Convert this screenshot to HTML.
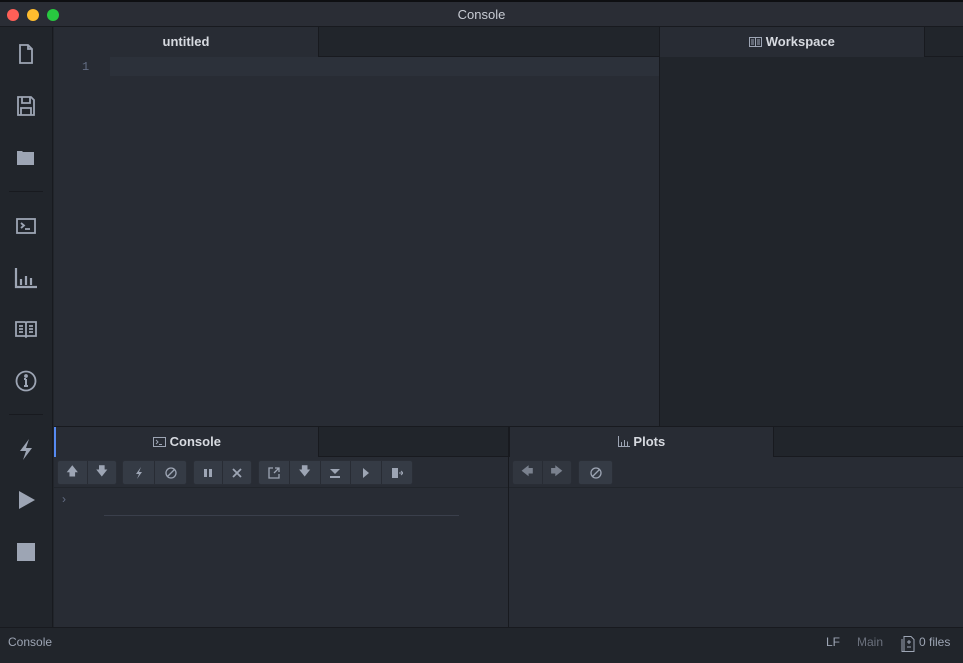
<!DOCTYPE html>
<html><head><meta charset="utf-8"><style>
*{box-sizing:border-box;margin:0;padding:0}
body{width:963px;height:657px;overflow:hidden;background:#21252b;font-family:"Liberation Sans",sans-serif;color:#d7dae0;position:relative}
.abs{position:absolute}
.title{left:0;top:0;width:963px;height:27px;background:#2a2d35;border-top:2px solid #0e0f12;border-bottom:1px solid #181a1f;text-align:center;font-size:13px;line-height:26px;color:#c8ccd4}
.dot{top:9px;width:12px;height:12px;border-radius:50%}
.side{left:0;top:27px;width:53px;height:600px;background:#21252b;border-right:1px solid #181a1f}
.ic{position:absolute;left:14px;width:24px;height:24px}
.ic svg{width:24px;height:24px;stroke:#9da5b4;fill:none;stroke-width:1.8}
.sep{position:absolute;left:9px;width:34px;height:1px;background:#181a1f}
.tabbar{background:#21252b;border-bottom:1px solid #181a1f}
.tab{background:#282c34;text-align:center;font-size:13px;font-weight:bold;color:#d7dae0;line-height:29px;border-right:1px solid #181a1f}
.btn{position:absolute;top:460px;height:25px;background:#353b45;border:1px solid #2a2e36;border-radius:3px;display:flex}
.btn span{flex:1;border-right:1px solid #282c34;display:flex;align-items:center;justify-content:center;color:#9da5b4;font-size:12px}
.btn span:last-child{border-right:none}
.btn svg{width:12px;height:12px;fill:#9da5b4;stroke:#9da5b4}
</style></head><body>
<div class="abs title">Console</div>
<div class="abs dot" style="left:7px;background:#fe5f57"></div>
<div class="abs dot" style="left:27px;background:#febc2e"></div>
<div class="abs dot" style="left:47px;background:#28c840"></div>

<div class="abs side">
 <div class="ic" style="top:15px"><svg viewBox="0 0 24 24"><path d="M6 3h8l4 4v14H6z M14 3v4h4"/></svg></div>
 <div class="ic" style="top:67px"><svg viewBox="0 0 24 24"><path d="M4 3h13l3 3v15H4z M8 3v6h8V3 M7 21v-7h10v7"/></svg></div>
 <div class="ic" style="top:119px"><svg viewBox="0 0 24 24"><path d="M3 5h5l1 1h11v13H3z" fill="#9da5b4" stroke="none"/></svg></div>
 <div class="sep" style="top:164px"></div>
 <div class="ic" style="top:187px"><svg viewBox="0 0 24 24"><rect x="3" y="5" width="18" height="14"/><path d="M7 9l3 2.5-3 2.5M11 15h5"/></svg></div>
 <div class="ic" style="top:239px"><svg viewBox="0 0 24 24"><path d="M2 2v19h21M7 19v-6M12 19v-9M17 19v-7" stroke-width="2.2"/></svg></div>
 <div class="ic" style="top:290px"><svg viewBox="0 0 24 24"><path d="M2 5h9l1 1 1-1h9v14H13l-1 1-1-1H2z M12 6v14 M5 9h4M5 12h4M5 15h4M15 9h4M15 12h4M15 15h4"/></svg></div>
 <div class="ic" style="top:342px"><svg viewBox="0 0 24 24"><circle cx="12" cy="12" r="9.5"/><path d="M12 10v7M10 17h4M10 10h2" stroke-width="2"/><circle cx="12" cy="7" r="1" fill="#9da5b4"/></svg></div>
 <div class="sep" style="top:387px"></div>
 <div class="ic" style="top:410px"><svg viewBox="0 0 24 24"><path d="M15 2L6 14h6l-3 9 9-12h-6z" fill="#9da5b4" stroke="none"/></svg></div>
 <div class="ic" style="top:461px"><svg viewBox="0 0 24 24"><path d="M5 3l16 9-16 9z" fill="#9da5b4" stroke="none"/></svg></div>
 <div class="abs" style="left:17px;top:516px;width:18px;height:18px;background:#9da5b4"></div>
</div>

<div class="abs tabbar" style="left:54px;top:27px;width:605px;height:30px"></div>
<div class="abs tab" style="left:54px;top:27px;width:265px;height:30px">untitled</div>
<div class="abs" style="left:54px;top:57px;width:605px;height:370px;background:#282c34"></div>
<div class="abs" style="left:110px;top:57px;width:549px;height:19px;background:#2c313a"></div>
<div class="abs" style="left:82px;top:60px;font-family:'Liberation Mono',monospace;font-size:12px;color:#636d83">1</div>

<div class="abs" style="left:659px;top:27px;width:1px;height:400px;background:#181a1f"></div>
<div class="abs tabbar" style="left:660px;top:27px;width:303px;height:30px"></div>
<div class="abs tab" style="left:660px;top:27px;width:265px;height:30px"><svg width="13" height="10" viewBox="0 0 13 10" style="vertical-align:-1px;stroke:#9da5b4;fill:none"><path d="M0.5 .5h12v9H.5zM6.5 .5v9M2 3h3M2 5h3M2 7h3M8 3h3M8 5h3M8 7h3"/></svg> Workspace</div>
<div class="abs" style="left:660px;top:57px;width:303px;height:370px;background:#21252b"></div>

<div class="abs" style="left:54px;top:426px;width:909px;height:1px;background:#181a1f"></div>
<div class="abs tabbar" style="left:54px;top:427px;width:909px;height:30px"></div>
<div class="abs tab" style="left:54px;top:427px;width:265px;height:30px;border-left:2px solid #568af2"><svg width="13" height="10" viewBox="0 0 13 10" style="vertical-align:-1px;stroke:#9da5b4;fill:none"><path d="M.5 .5h12v9H.5zM3 3l2 2-2 2M6 7.5h3"/></svg> Console</div>
<div class="abs tab" style="left:509px;top:427px;width:265px;height:30px;border-left:1px solid #181a1f"><svg width="12" height="11" viewBox="0 0 12 11" style="vertical-align:-1px;stroke:#9da5b4;fill:none"><path d="M.5 0v10.5H12M3.5 10V6M6.5 10V4M9.5 10V5.5"/></svg> Plots</div>
<div class="abs" style="left:54px;top:457px;width:909px;height:170px;background:#282c34"></div>
<div class="abs" style="left:54px;top:487px;width:909px;height:1px;background:#21252b"></div>
<div class="abs" style="left:508px;top:427px;width:1px;height:200px;background:#181a1f"></div>
<div class="abs" style="left:62px;top:492px;color:#636d83;font-size:12px">›</div>
<div class="abs" style="left:104px;top:515px;width:355px;height:1px;background:#3a3f4b"></div>

<div class="btn" style="left:57px;width:60px"><span>🡅</span><span>🡇</span></div>
<div class="btn" style="left:122px;width:65px"><span><svg viewBox="0 0 12 12"><path d="M8 0L3 7h3l-2 5 5-7H6z" stroke="none"/></svg></span><span><svg viewBox="0 0 12 12" style="fill:none;stroke-width:1.3"><circle cx="6" cy="6" r="5"/><path d="M2.5 9.5l7-7"/></svg></span></div>
<div class="btn" style="left:193px;width:59px"><span><svg viewBox="0 0 12 12"><rect x="2" y="2" width="3" height="8" stroke="none"/><rect x="7" y="2" width="3" height="8" stroke="none"/></svg></span><span><svg viewBox="0 0 12 12" style="stroke-width:1.8"><path d="M2 2l8 8M10 2l-8 8"/></svg></span></div>
<div class="btn" style="left:258px;width:155px"><span><svg viewBox="0 0 12 12" style="fill:none;stroke-width:1.3"><path d="M5 1H1v10h10V7M7 1h4v4M11 1L6 6"/></svg></span><span>🡇</span><span><svg viewBox="0 0 12 12"><path d="M1 2h10L6 7z" stroke="none"/><rect x="1" y="9" width="10" height="2" stroke="none"/></svg></span><span><svg viewBox="0 0 12 12"><path d="M3 1l6 5-6 5z" stroke="none"/></svg></span><span><svg viewBox="0 0 12 12"><path d="M1 1h6v10H1z" stroke="none"/><path d="M8 6h4M10 4l2 2-2 2" fill="none"/></svg></span></div>
<div class="btn" style="left:512px;width:60px;opacity:.7"><span>🡄</span><span>🡆</span></div>
<div class="btn" style="left:578px;width:35px"><span><svg viewBox="0 0 12 12" style="fill:none;stroke-width:1.3"><circle cx="6" cy="6" r="5"/><path d="M2.5 9.5l7-7"/></svg></span></div>

<div class="abs" style="left:0;top:627px;width:963px;height:30px;background:#21252b;border-top:1px solid #181a1f;font-size:12px;line-height:29px">
 <span class="abs" style="left:8px;color:#9da5b4">Console</span>
 <span class="abs" style="left:826px;color:#9da5b4">LF</span>
 <span class="abs" style="left:857px;color:#6b717d">Main</span>
 <span class="abs" style="left:901px;top:6px"><svg width="14" height="16" viewBox="0 0 14 16" style="fill:none;stroke:#9da5b4"><path d="M3 .5h7l3 3V15.5H3z M1 3v12.5h2 M6 6h4M8 4v4M6 11h4"/></svg></span>
 <span class="abs" style="left:919px;color:#9da5b4">0 files</span>
</div>
</body></html>
